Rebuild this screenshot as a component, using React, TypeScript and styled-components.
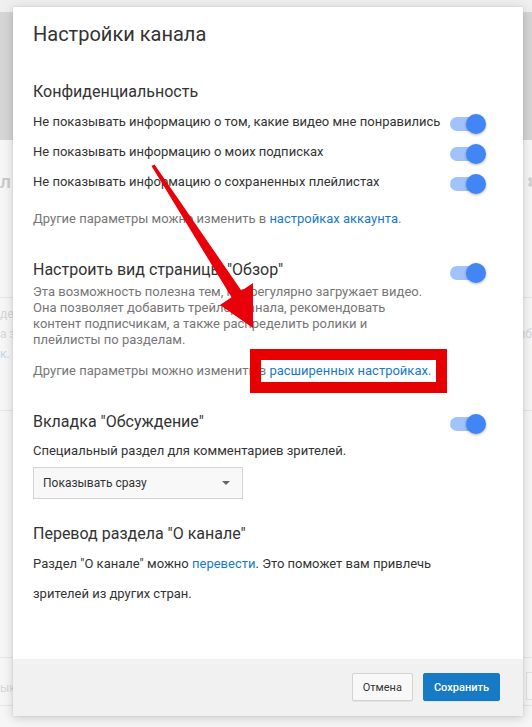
import React from "react";
import styled, { createGlobalStyle } from "styled-components";

const GlobalStyle = createGlobalStyle`
  html, body {
    margin: 0;
    padding: 0;
    background: #f6f6f6;
    font-family: Roboto, "Liberation Sans", Arial, sans-serif;
    overflow: hidden;
  }
  * { box-sizing: border-box; }
`;

/* ---------- faded page behind the modal ---------- */
const Page = styled.div`
  position: relative;
  width: 532px;
  height: 727px;
  overflow: hidden;
  background: #f6f6f6;
  display: flex;
  flex-direction: column;
`;

const Masthead = styled.div`
  height: 12px;
  background: #efefef;
  flex-shrink: 0;
`;

const Banner = styled.div`
  height: 128px;
  background: #d5d5d5;
  flex-shrink: 0;
`;

const ChannelRow = styled.div`
  height: 157px;
  flex-shrink: 0;
  display: flex;
  justify-content: space-between;
  align-items: flex-start;
  padding-top: 30px;
`;

const FaintName = styled.span`
  font-size: 19px;
  font-weight: 500;
  color: #c9c9c9;
  line-height: 24px;
`;

const FaintGear = styled.svg`
  width: 20px;
  height: 20px;
  margin-top: 2px;
  margin-right: -12px;
  color: #d3d3d3;
`;

const FaintBlock = styled.div<{ $h: number; $pt?: number }>`
  height: ${(p) => p.$h}px;
  flex-shrink: 0;
  border-top: 1px solid #e6e6e6;
  display: flex;
  justify-content: space-between;
  align-items: flex-start;
  padding-top: ${(p) => p.$pt ?? 6}px;
`;

const FaintLines = styled.div<{ $right?: boolean }>`
  display: flex;
  flex-direction: column;
  align-items: ${(p) => (p.$right ? "flex-end" : "flex-start")};
  font-size: 12px;
  line-height: 20px;
  color: #d6d6d6;
  padding-top: ${(p) => (p.$right ? 20 : 0)}px;
`;

const FaintLink = styled.span`
  color: #bcd6ee;
`;

const FaintButton = styled.div`
  width: 16px;
  height: 28px;
  margin-top: -6px;
  margin-right: -10px;
  border: 1px solid #e2e2e2;
  background: #f8f8f8;
`;

/* ---------- modal ---------- */
const Dialog = styled.div`
  position: absolute;
  top: 7px;
  left: 13px;
  width: 510px;
  height: 709px;
  background: #fff;
  display: flex;
  flex-direction: column;
  box-shadow: 0 2px 10px rgba(0, 0, 0, 0.18), 0 0 1px rgba(0, 0, 0, 0.2);
`;

const Body = styled.div`
  flex: 1;
  padding: 15px 37px 0 20px;
  display: flex;
  flex-direction: column;
`;

const Title = styled.h1`
  margin: 0 0 36px;
  font-size: 20px;
  line-height: 24px;
  font-weight: 400;
  color: #333;
`;

const Heading = styled.h2<{ $mt?: number }>`
  margin: ${(p) => p.$mt ?? 0}px 0 0;
  font-size: 16px;
  line-height: 20px;
  font-weight: 400;
  color: #333;
`;

const HeadRow = styled.div<{ $mt: number }>`
  margin-top: ${(p) => p.$mt}px;
  display: flex;
  justify-content: space-between;
  align-items: flex-start;
`;

const OptionList = styled.div`
  margin-top: 5px;
  display: flex;
  flex-direction: column;
`;

const OptionRow = styled.div`
  height: 30px;
  display: flex;
  justify-content: space-between;
  align-items: flex-start;
  font-size: 13px;
  line-height: 30px;
  color: #333;
`;

const Switch = styled.span<{ $mt: number }>`
  position: relative;
  display: block;
  width: 36px;
  height: 20px;
  flex-shrink: 0;
  margin: ${(p) => p.$mt}px 0 ${(p) => -p.$mt}px;

  &::before {
    content: "";
    position: absolute;
    left: 0;
    top: 3px;
    width: 34px;
    height: 14px;
    border-radius: 7px;
    background: #a1c2fa;
  }
  &::after {
    content: "";
    position: absolute;
    right: 0;
    top: 0;
    width: 20px;
    height: 20px;
    border-radius: 50%;
    background: #4285f4;
    box-shadow: 0 1px 3px rgba(0, 0, 0, 0.3);
  }
`;

const Text = styled.p<{ $mt: number; $muted?: boolean; $lh?: number }>`
  margin: ${(p) => p.$mt}px 0 0;
  font-size: 13px;
  line-height: ${(p) => p.$lh ?? 16}px;
  color: ${(p) => (p.$muted ? "#767676" : "#333")};
`;

const Link = styled.a`
  color: #167ac6;
  text-decoration: none;
`;

const Select = styled.div`
  margin-top: 8px;
  width: 210px;
  height: 32px;
  background: #f8f8f8;
  border: 1px solid #d3d3d3;
  display: flex;
  align-items: center;
  justify-content: space-between;
  padding: 0 12px 0 9px;
  font-size: 12px;
  color: #333;
`;

const Caret = styled.svg`
  width: 8px;
  height: 4px;
  color: #666;
`;

const Footer = styled.div`
  height: 57px;
  flex-shrink: 0;
  background: #f1f1f1;
  display: flex;
  justify-content: flex-end;
  align-items: center;
  gap: 10px;
  padding: 0 23px 1px;
`;

const Button = styled.button<{ $primary?: boolean }>`
  height: 28px;
  padding: 0 10px;
  font-family: Roboto, "Liberation Sans", Arial, sans-serif;
  font-size: 11px;
  font-weight: ${(p) => (p.$primary ? 500 : 400)};
  color: ${(p) => (p.$primary ? "#fff" : "#333")};
  background: ${(p) => (p.$primary ? "#167ac6" : "#f8f8f8")};
  border: 1px solid ${(p) => (p.$primary ? "#167ac6" : "#d3d3d3")};
  border-radius: 2px;
  box-shadow: 0 1px 0 rgba(0, 0, 0, 0.05);
`;

/* ---------- annotations ---------- */
const ArrowLayer = styled.svg`
  position: absolute;
  left: 0;
  top: 0;
  width: 532px;
  height: 727px;
  pointer-events: none;
`;

const RedBox = styled.div`
  position: absolute;
  left: 250px;
  top: 349px;
  width: 197px;
  height: 44px;
  border: 11px solid #e60000;
  pointer-events: none;
`;

export default function App() {
  return (
    <>
      <GlobalStyle />
      <Page>
        <Masthead />
        <Banner />
        <ChannelRow>
          <FaintName>л</FaintName>
          <FaintGear viewBox="0 0 24 24" fill="currentColor">
            <path d="M19.4 13a7.5 7.5 0 0 0 0-2l2.1-1.6-2-3.5-2.5 1a7.4 7.4 0 0 0-1.7-1L15 3h-4l-.4 2.9a7.4 7.4 0 0 0-1.7 1l-2.5-1-2 3.5L6.6 11a7.5 7.5 0 0 0 0 2l-2.1 1.6 2 3.5 2.5-1a7.4 7.4 0 0 0 1.7 1L11 21h4l.4-2.9a7.4 7.4 0 0 0 1.7-1l2.5 1 2-3.5zM13 15.5a3.5 3.5 0 1 1 0-7 3.5 3.5 0 0 1 0 7z" />
          </FaintGear>
        </ChannelRow>
        <FaintBlock $h={113}>
          <FaintLines>
            <span>дет</span>
            <span>а з</span>
            <FaintLink>к.</FaintLink>
          </FaintLines>
          <FaintLines $right>
            <span>иб</span>
          </FaintLines>
        </FaintBlock>
        <FaintBlock $h={247} />
        <FaintBlock $h={48} $pt={20}>
          <FaintLines>
            <span>ык</span>
          </FaintLines>
          <FaintButton />
        </FaintBlock>
        <FaintBlock $h={40} />

        <Dialog>
          <Body>
            <Title>Настройки канала</Title>

            <Heading>Конфиденциальность</Heading>
            <OptionList>
              <OptionRow>
                <span>Не показывать информацию о том, какие видео мне понравились</span>
                <Switch $mt={7} />
              </OptionRow>
              <OptionRow>
                <span>Не показывать информацию о моих подписках</span>
                <Switch $mt={7} />
              </OptionRow>
              <OptionRow>
                <span>Не показывать информацию о сохраненных плейлистах</span>
                <Switch $mt={7} />
              </OptionRow>
            </OptionList>
            <Text $mt={14} $muted>
              Другие параметры можно изменить в <Link href="#">настройках аккаунта</Link>.
            </Text>

            <HeadRow $mt={33}>
              <Heading>Настроить вид страницы "Обзор"</Heading>
              <Switch $mt={3} />
            </HeadRow>
            <Text $mt={4} $muted>
              Эта возможность полезна тем, кто регулярно загружает видео.
              <br />
              Она позволяет добавить трейлер канала, рекомендовать
              <br />
              контент подписчикам, а также распределить ролики и
              <br />
              плейлисты по разделам.
            </Text>
            <Text $mt={15} $muted>
              Другие параметры можно изменить в <Link href="#">расширенных настройках</Link>.
            </Text>

            <HeadRow $mt={33}>
              <Heading>Вкладка "Обсуждение"</Heading>
              <Switch $mt={2} />
            </HeadRow>
            <Text $mt={11}>Специальный раздел для комментариев зрителей.</Text>
            <Select>
              <span>Показывать сразу</span>
              <Caret viewBox="0 0 8 4" fill="currentColor">
                <path d="M0 0h8L4 4z" />
              </Caret>
            </Select>

            <Heading $mt={25}>Перевод раздела "О канале"</Heading>
            <Text $mt={5} $lh={30}>
              Раздел "О канале" можно <Link href="#">перевести</Link>. Это поможет вам привлечь
              <br />
              зрителей из других стран.
            </Text>
          </Body>
          <Footer>
            <Button>Отмена</Button>
            <Button $primary>Сохранить</Button>
          </Footer>
        </Dialog>

        <ArrowLayer viewBox="0 0 532 727">
          <polygon
            fill="#e8000a"
            points="151.5,166 154.5,164.5 241.5,290.7 253,283 253,328 220,305 231.5,297.3"
          />
        </ArrowLayer>
        <RedBox />
      </Page>
    </>
  );
}
